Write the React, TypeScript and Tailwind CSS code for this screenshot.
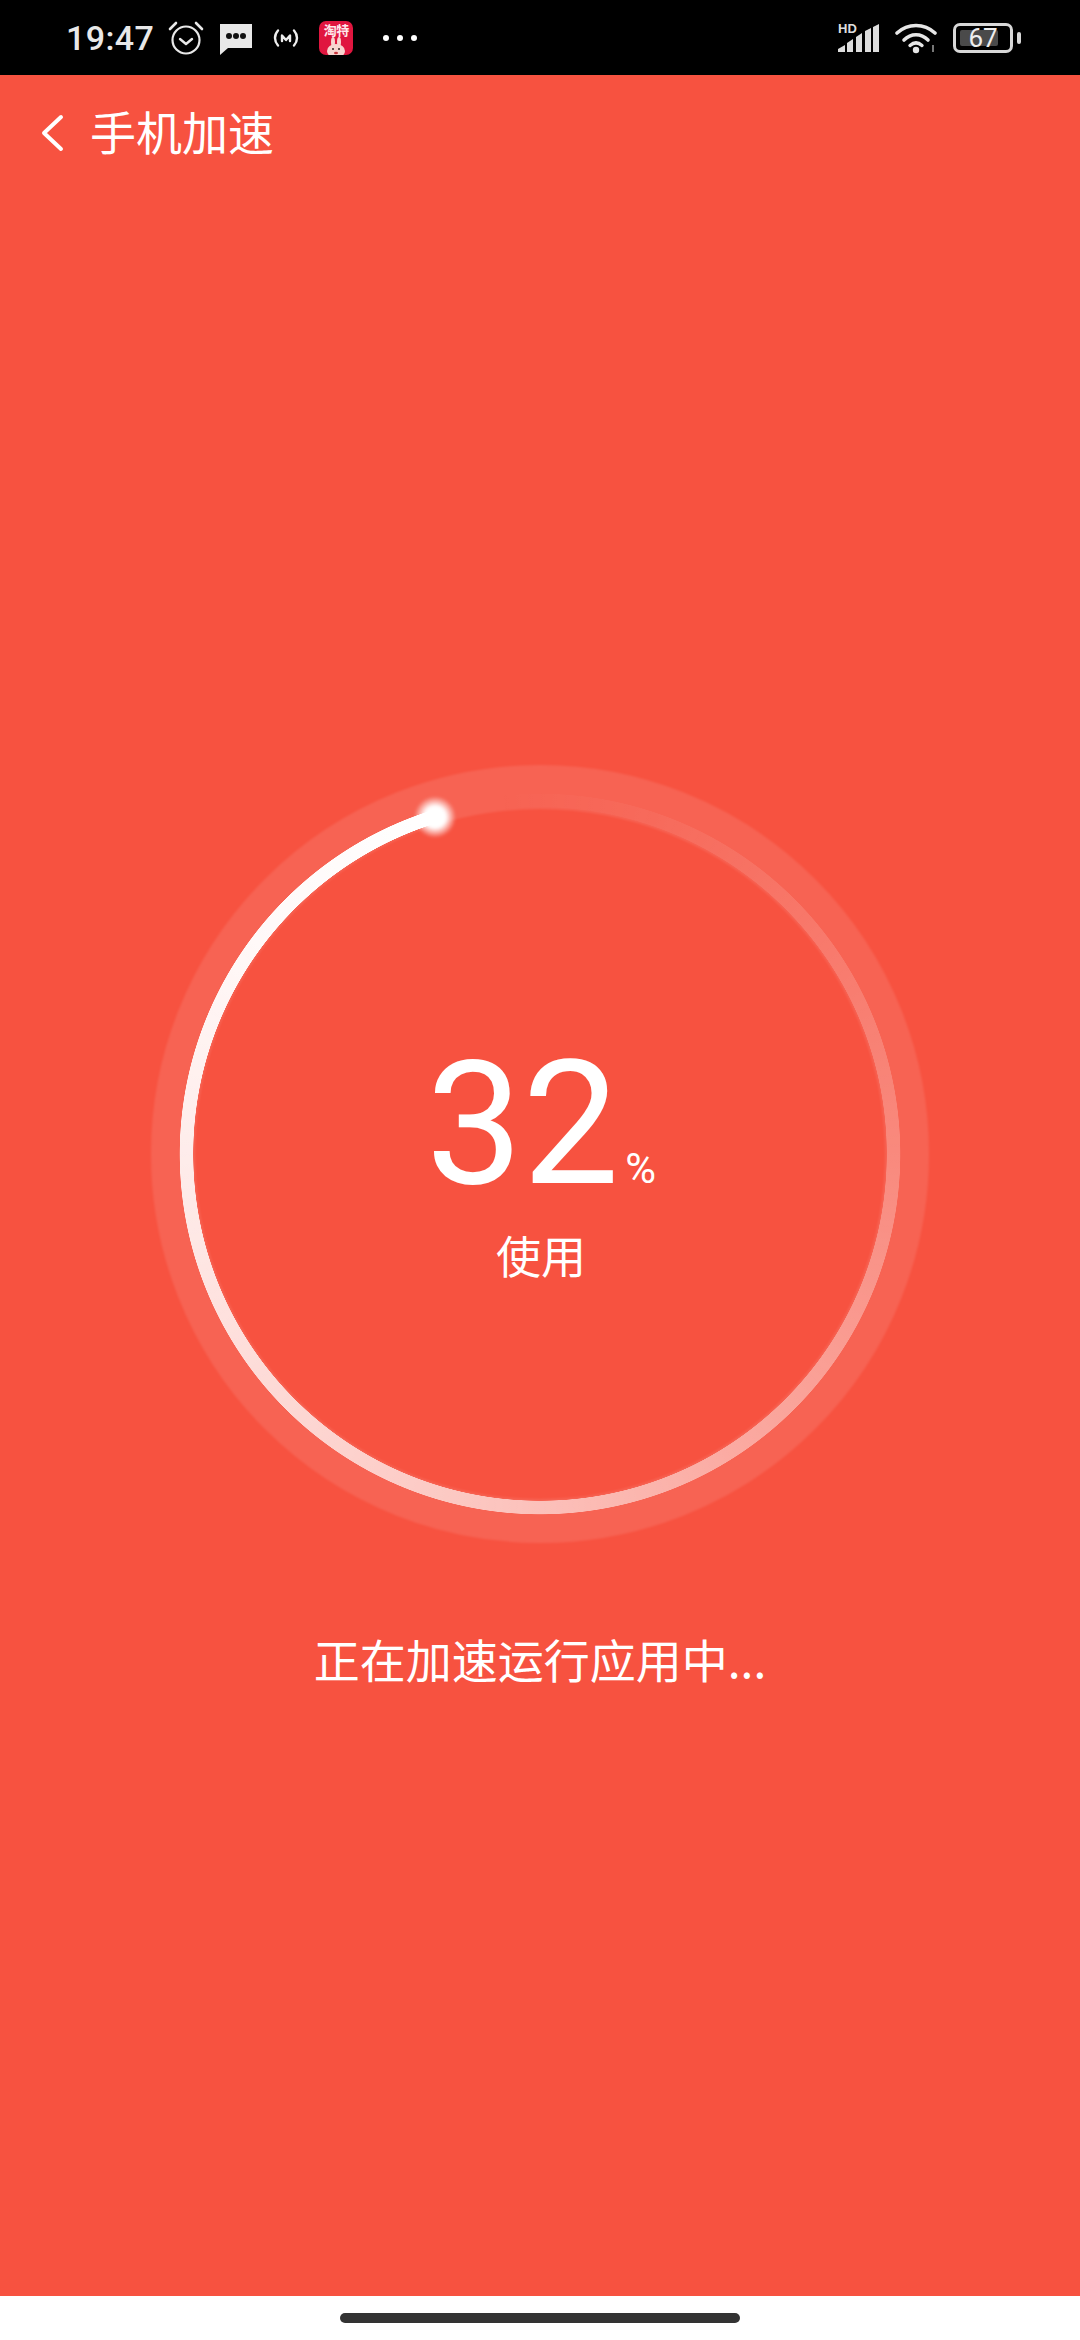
import React from "react";

const CJK = { fontFamily: '"Noto Sans CJK SC", "Noto Sans", sans-serif' };

function Alarm() {
  return (
    <svg width={36} height={36} viewBox="0 0 36 36" fill="none" stroke="#e8e8e8" strokeLinecap="round">
      <circle cx={18} cy={20} r={13.5} strokeWidth={2.2} />
      <path d="M12 19l6 5 6-5" strokeWidth={2.4} strokeLinejoin="round" />
      <path d="M2 9l6-6M34 9l-6-6" strokeWidth={2.6} />
    </svg>
  );
}

function Message() {
  return (
    <svg width={34} height={32} viewBox="0 0 34 32">
      <path d="M1 1h32v24H9l-8 7z" fill="#e8e8e8" />
      <circle cx={10} cy={13} r={3} fill="#111" />
      <circle cx={17} cy={13} r={3} fill="#111" />
      <circle cx={24} cy={13} r={3} fill="#111" />
    </svg>
  );
}

function Hotspot() {
  return (
    <svg width={26} height={20} viewBox="0 0 26 20" fill="none" stroke="#eee" strokeWidth={2.4} strokeLinecap="round">
      <path d="M5 2.5C1 7 1 13 5 17.5M21 2.5C25 7 25 13 21 17.5" />
      <path d="M9 13V7.5l4 4.5 4-4.5V13" strokeLinejoin="round" />
    </svg>
  );
}

function AppBadge() {
  return (
    <div className="relative w-[34px] h-[34px] rounded-[7px] bg-[#e0163f] flex justify-center pt-[1px]">
      <span className="text-[13px] leading-[16px] font-bold text-[#ffe9ec] tracking-[-0.5px]" style={CJK}>淘特</span>
      <svg width={22} height={18} viewBox="0 0 22 18" className="absolute bottom-0 left-[6px]">
        <ellipse cx={8} cy={5} rx={2} ry={5} fill="#f8d5d0" />
        <ellipse cx={14} cy={5} rx={2} ry={5} fill="#f8d5d0" />
        <ellipse cx={11} cy={14} rx={9} ry={7} fill="#f8d5d0" />
        <circle cx={8} cy={12} r={1} fill="#322" />
        <circle cx={14} cy={12} r={1} fill="#322" />
        <ellipse cx={11} cy={16} rx={2} ry={1.3} fill="#c9343c" />
      </svg>
    </div>
  );
}

function Signal() {
  return (
    <div className="relative w-[42px] h-[30px]">
      <span
        className="absolute left-0 top-[-1px] text-[13px] leading-[13px] font-bold text-[#ddd]"
        style={{ fontFamily: '"Liberation Sans", sans-serif' }}
      >
        HD
      </span>
      <svg width={42} height={30} viewBox="0 0 42 30" fill="#ddd" className="block">
        <path d="M0 29v-3l7-4v7zM9 29v-9l6-4v13zM18 29V14l6-4v19zM27 29V8l6-3v24zM35 29V4l6-3v28z" />
      </svg>
    </div>
  );
}

function Wifi() {
  return (
    <svg width={44} height={32} viewBox="0 0 44 32" fill="none" className="block">
      <g stroke="#e6e6e6" strokeWidth={3.6} strokeLinecap="round">
        <path d="M2 11C13 1 29 1 40 11" />
        <path d="M9 18C16 11 26 11 33 18" />
      </g>
      <path d="M15 23.5C19 20 23 20 27 23.5" stroke="#e6e6e6" strokeWidth={3.4} strokeLinecap="round" />
      <circle cx={21} cy={28} r={3.2} fill="#e6e6e6" />
      <path d="M38 23v7" stroke="#777" strokeWidth={2} />
    </svg>
  );
}

function Battery() {
  return (
    <div className="flex items-center gap-[4px]">
      <div className="relative w-[60px] h-[30px] rounded-[7px] border-[3px] border-[#d8d8d8] p-[4px] flex">
        <div className="w-[38px] h-full rounded-[2px] bg-[#4a4a4a]" />
        <span
          className="absolute inset-0 flex items-center justify-center text-[26px] leading-none text-[#eee]"
          style={{ fontFamily: "Roboto, sans-serif" }}
        >
          67
        </span>
      </div>
      <div className="w-[4px] h-[12px] rounded-[2px] bg-[#d8d8d8]" />
    </div>
  );
}

function Ring() {
  return (
    <div className="relative w-[780px] h-[780px] text-white">
      <div className="absolute inset-[1px] rounded-full border-[44px] border-white/[0.1] blur-[1px]" />
      <div className="absolute inset-0 rounded-full bg-[conic-gradient(from_342.5deg,rgba(255,255,255,0)_3%,rgba(255,255,255,0.05)_10%,rgba(255,255,255,0.25)_30%,rgba(255,255,255,0.45)_45%,rgba(255,255,255,0.62)_56%,rgba(255,255,255,0.85)_76%,rgba(255,255,255,0.96)_90%,rgba(255,255,255,1)_100%)] [mask-image:radial-gradient(circle,transparent_346.5px,black_347px,black_360px,transparent_360.6px)]" />
      <svg width={60} height={60} viewBox="0 0 60 60" className="absolute left-[255px] top-[23px] blur-[1.5px]">
        <defs>
          <radialGradient id="glow">
            <stop offset="0" stopColor="#fff" />
            <stop offset="0.5" stopColor="#fff" />
            <stop offset="1" stopColor="#fff" stopOpacity="0" />
          </radialGradient>
        </defs>
        <circle cx={30} cy={30} r={21} fill="url(#glow)" />
      </svg>
      <div className="absolute inset-0 flex flex-col items-center">
        <div className="mt-[295px] flex items-baseline ml-[2px] h-[130px]">
          <span className="text-[172px] leading-[130px] font-normal" style={{ fontFamily: "Roboto, sans-serif" }}>32</span>
          <span className="ml-[6px] text-[42px] leading-none font-normal" style={{ fontFamily: "Roboto, sans-serif" }}>%</span>
        </div>
        <span className="mt-[36px] ml-[2px] text-[45px] leading-[60px]" style={CJK}>使用</span>
      </div>
    </div>
  );
}

export default function App() {
  return (
    <div className="w-[1080px] h-[2340px] flex flex-col bg-[#f75240] overflow-hidden">
      <div className="h-[75px] bg-black flex items-center justify-between pl-[66px] pr-[59px]">
        <div className="flex items-center">
          <span
            className="text-[34px] leading-none text-[#e8e8e8] tracking-[0.4px] font-medium"
            style={{ fontFamily: "Roboto, sans-serif" }}
          >
            19:47
          </span>
          <div className="ml-[14px]"><Alarm /></div>
          <div className="ml-[15px] mt-[2px]"><Message /></div>
          <div className="ml-[20px]"><Hotspot /></div>
          <div className="ml-[20px]"><AppBadge /></div>
          <div className="ml-[30px] flex gap-[8px]">
            <div className="w-[6px] h-[6px] rounded-full bg-white" />
            <div className="w-[6px] h-[6px] rounded-full bg-white" />
            <div className="w-[6px] h-[6px] rounded-full bg-white" />
          </div>
        </div>
        <div className="flex items-center">
          <Signal />
          <div className="ml-[15px]"><Wifi /></div>
          <div className="ml-[14px]"><Battery /></div>
        </div>
      </div>

      <div className="h-[115px] flex items-center pl-[40px] text-white">
        <svg width={24} height={38} viewBox="0 0 24 38" fill="none" stroke="#fff" strokeWidth={4} strokeLinecap="round" strokeLinejoin="round">
          <path d="M21 3L4 19l17 16" />
        </svg>
        <span className="ml-[26px] text-[46px] leading-none mb-[5px]" style={CJK}>手机加速</span>
      </div>

      <div className="flex-1 flex flex-col items-center pt-[574px]">
        <Ring />
        <span className="mt-[84px] text-[46px] leading-[60px] text-white" style={CJK}>正在加速运行应用中...</span>
      </div>

      <div className="h-[44px] bg-white flex items-center justify-center">
        <div className="w-[400px] h-[10px] rounded-full bg-[#333]" />
      </div>
    </div>
  );
}
